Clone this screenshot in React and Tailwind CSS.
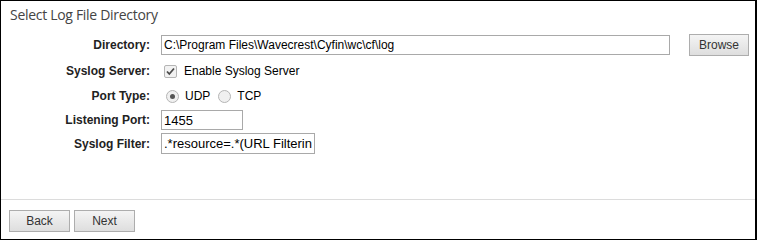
import React from 'react';

const Label = ({ children }) => (
  <div className="w-[149px] shrink-0 text-right text-[12px] font-bold text-[#222]">{children}</div>
);

const Checkbox = () => (
  <span className="w-[13px] h-[13px] border border-[#b5b5b5] bg-[#f2f2f2] flex items-center justify-center rounded-[2px]">
    <svg width="11" height="11" viewBox="0 0 11 11">
      <path d="M2 5.5 L4.3 8 L9 2.5" fill="none" stroke="#4a4a4a" strokeWidth="1.8" />
    </svg>
  </span>
);

const Radio = ({ checked }) => (
  <span className="w-[13px] h-[13px] rounded-full border border-[#b5b5b5] bg-[#f0f0f0] flex items-center justify-center">
    {checked && <span className="w-[5px] h-[5px] rounded-full bg-[#555]" />}
  </span>
);

const Button = ({ children, className = '' }) => (
  <button className={`h-[22px] border border-[#adadad] bg-gradient-to-b from-[#f4f4f4] to-[#dedede] text-[12px] text-[#333] ${className}`}>
    {children}
  </button>
);

export default function App() {
  return (
    <div
      className="w-[757px] h-[240px] border border-black border-r-2 bg-white flex flex-col"
      style={{ fontFamily: '"Liberation Sans", Arial, sans-serif' }}
    >
      <div
        className="h-[29px] pl-[9px] pt-[3px] text-[14px] tracking-[-0.3px] text-[#444]"
        style={{ fontFamily: '"Open Sans", sans-serif' }}
      >
        Select Log File Directory
      </div>

      <div className="flex-1">
        <div className="flex items-center h-[22px] mt-[4px]">
          <Label>Directory:</Label>
          <input
            readOnly
            value="C:\Program Files\Wavecrest\Cyfin\wc\cf\log"
            className="ml-[11px] w-[509px] h-[20px] border border-[#a9a9a9] px-[2px] text-[12px] text-black outline-none"
          />
          <Button className="ml-[19px] w-[60px]">Browse</Button>
        </div>

        <div className="flex items-center h-[20px] mt-[5px]">
          <Label>Syslog Server:</Label>
          <div className="ml-[14px] flex items-center gap-[7px] text-[12px] text-black">
            <Checkbox />
            <span>Enable Syslog Server</span>
          </div>
        </div>

        <div className="flex items-center h-[20px] mt-[5px]">
          <Label>Port Type:</Label>
          <div className="ml-[16px] flex items-center text-[12px] text-black">
            <Radio checked />
            <span className="ml-[6px]">UDP</span>
            <span className="ml-[8px]"><Radio /></span>
            <span className="ml-[6px]">TCP</span>
          </div>
        </div>

        <div className="flex items-center h-[20px] mt-[4px]">
          <Label>Listening Port:</Label>
          <input
            readOnly
            value="1455"
            className="ml-[11px] w-[82px] h-[20px] border border-[#a9a9a9] px-[2px] text-[13px] text-black outline-none"
          />
        </div>

        <div className="flex items-center h-[21px] mt-[3px]">
          <Label>Syslog Filter:</Label>
          <input
            readOnly
            value=".*resource=.*(URL Filtering).*"
            className="ml-[11px] w-[154px] h-[21px] border border-[#a9a9a9] px-[2px] text-[13px] text-black outline-none"
          />
        </div>
      </div>

      <div className="h-[40px] border-t border-[#dcdcdc] pl-[8px] pt-[10px] flex gap-[4px]">
        <Button className="w-[61px]">Back</Button>
        <Button className="w-[61px]">Next</Button>
      </div>
    </div>
  );
}
